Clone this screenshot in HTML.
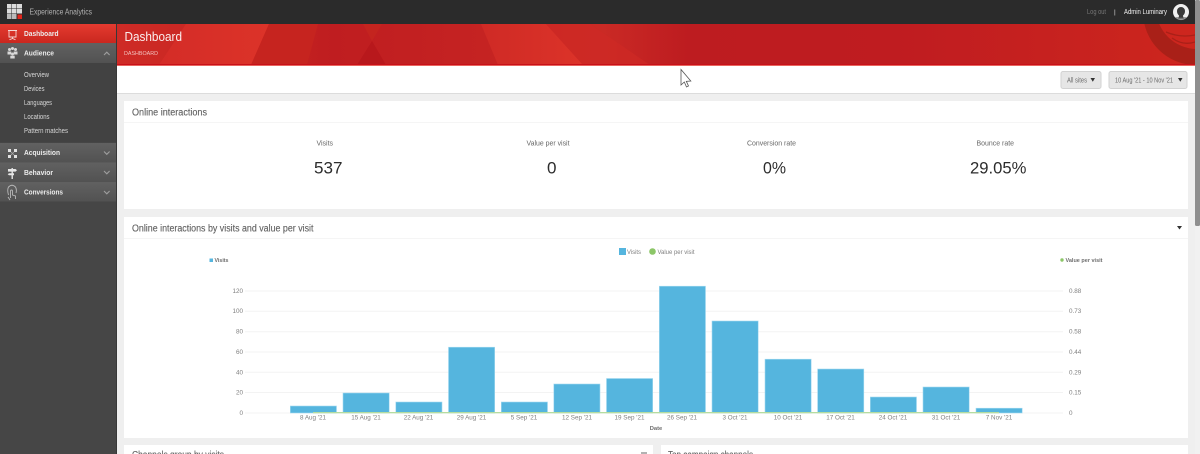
<!DOCTYPE html>
<html lang="en"><head><meta charset="utf-8"><title>Dashboard</title>
<style>
html,body{margin:0;padding:0;width:1200px;height:454px;overflow:hidden;background:#efefef}
svg{display:block}
text{font-family:"Liberation Sans",sans-serif;white-space:pre}
.n{font-size:7.5px;font-weight:bold;fill:#ececec}
.s{font-size:7px;fill:#d8d8d8}
.t{font-size:10px;fill:#5f5f5f;stroke:#5f5f5f;stroke-width:.12px}
.l{font-size:7.2px;fill:#666}
.b{font-size:17px;fill:#2c2c2c}
.a{font-size:6.3px;fill:#808080}
</style></head><body>
<svg xmlns="http://www.w3.org/2000/svg" width="1200" height="454" viewBox="0 0 1200 454">
<defs>
<linearGradient id="hdr" gradientUnits="userSpaceOnUse" x1="117" x2="1195" y1="0" y2="0">
<stop offset="0" stop-color="#ce2b26"/><stop offset=".14" stop-color="#c62420"/><stop offset=".2" stop-color="#bf1d20"/><stop offset=".34" stop-color="#c52322"/><stop offset=".45" stop-color="#ca2a25"/><stop offset=".53" stop-color="#bd1c20"/><stop offset=".72" stop-color="#bf1c20"/><stop offset="1" stop-color="#cd261e"/>
</linearGradient>
<linearGradient id="br1" x1="0" x2="1" y1="0" y2="0"><stop offset="0" stop-color="#d42c27"/><stop offset="1" stop-color="#dc3329"/></linearGradient>
<linearGradient id="br2" x1="0" x2="1" y1="0" y2="0"><stop offset="0" stop-color="#cf2a25"/><stop offset="1" stop-color="#dc3329"/></linearGradient>
<linearGradient id="act" x1="0" x2="0" y1="0" y2="1"><stop offset="0" stop-color="#e53b30"/><stop offset="1" stop-color="#c9271f"/></linearGradient>
<linearGradient id="gr" x1="0" x2="0" y1="0" y2="1"><stop offset="0" stop-color="#616161"/><stop offset="1" stop-color="#525252"/></linearGradient>
<clipPath id="hc"><rect x="117" y="24" width="1078" height="40"/></clipPath>
</defs>

<!-- top bar -->
<rect width="1200" height="24" fill="#2b2b2b"/>
<g fill="#dcdcdc">
<rect x="7" y="4" width="4.5" height="4.5"/><rect x="12" y="4" width="4.5" height="4.5"/><rect x="17" y="4" width="5" height="4.5"/>
<rect x="7" y="9" width="4.5" height="4.5"/><rect x="12" y="9" width="4.5" height="4.5"/><rect x="17" y="9" width="5" height="4.5"/>
<rect x="7" y="14" width="4.5" height="5" fill="#bbb"/><rect x="12" y="14" width="4.5" height="5" fill="#bbb"/>
</g>
<rect x="17.500" y="14.500" width="4.500" height="4.500" fill="#e1261c"/>
<text x="29.500" y="14.500" font-size="8" fill="#b0b0b0" textLength="62.500" lengthAdjust="spacingAndGlyphs">Experience Analytics</text>
<text x="1087" y="14" font-size="7" fill="#777" textLength="19" lengthAdjust="spacingAndGlyphs">Log out</text>
<text x="1114" y="14" font-size="6.500" fill="#ddd">|</text>
<text x="1124" y="14" font-size="7" fill="#f2f2f2" textLength="43" lengthAdjust="spacingAndGlyphs">Admin Luminary</text>
<circle cx="1181" cy="12" r="8" fill="#f1f1f1"/>
<path d="M1178 18.500q1 -1 1 -3q-2 -1.500 -2 -4.500a4 4 0 0 1 8 0q0 3 -2 4.500q0 2 1 3z" fill="#3a3a3a"/>
<path d="M1175 17.500a8 8 0 0 0 12 0l-1.500 -.5h-9z" fill="#555" opacity=".55"/>

<!-- sidebar -->
<rect x="0" y="24" width="117" height="430" fill="#464646"/>
<rect x="116" y="24" width="1" height="430" fill="#383838"/>
<rect x="0" y="24" width="116" height="19" fill="url(#act)"/>
<rect x="0" y="43" width="116" height="20" fill="url(#gr)"/>
<rect x="0" y="63" width="116" height="79" fill="#424242"/>
<rect x="0" y="143" width="116" height="19.500" fill="url(#gr)"/>
<rect x="0" y="162.500" width="116" height="19.500" fill="url(#gr)"/>
<rect x="0" y="182" width="116" height="19.500" fill="url(#gr)"/>

<path d="M8 30.500h9M9 30.500v6.500h7v-6.500M12.500 37v1.500M12.500 38.500l-3 1.200M12.500 38.500l3 1.200" fill="none" stroke="#f5d6d2" stroke-width=".9"/>
<g fill="#d8d8d8"><circle cx="9.500" cy="49.500" r="1.500"/><circle cx="12.500" cy="48.500" r="1.500"/><circle cx="15.500" cy="49.500" r="1.500"/><rect x="7.500" y="51.500" width="3.800" height="3"/><rect x="13.700" y="51.500" width="3.800" height="3"/><circle cx="12.500" cy="54" r="1.500"/><rect x="10.300" y="55.700" width="4.400" height="2.800"/></g>
<g fill="#e2e2e2"><rect x="8" y="149" width="3" height="3"/><rect x="14" y="149" width="3" height="3"/><rect x="8" y="155" width="3" height="3"/><rect x="14" y="155" width="3" height="3"/></g>
<path d="M11 152l3 3M14 152l-3 3" stroke="#a8a8a8" stroke-width=".8"/>
<path d="M11.500 168h1.400v11h-1.400zM8 169h7.500l1.500 1.300 -1.500 1.300h-7.500zM9 173.200h5v2h-5l-1.300 -1z" fill="#e6e6e6"/>
<path d="M8.500 195q-1.500 -5 0 -8q3.500 -3.500 7 0q1.500 3 .5 6M10.500 198v-7a1 1 0 0 1 2 0v4l3 1v3M8 197l2 3" fill="none" stroke="#b8b8b8" stroke-width=".9"/>

<text class="n" x="24" y="36" fill="#fff" textLength="34.500" lengthAdjust="spacingAndGlyphs">Dashboard</text>
<text class="n" x="24" y="55.500" textLength="30" lengthAdjust="spacingAndGlyphs">Audience</text>
<text class="s" x="24" y="77" textLength="25" lengthAdjust="spacingAndGlyphs">Overview</text>
<text class="s" x="24" y="91" textLength="20.500" lengthAdjust="spacingAndGlyphs">Devices</text>
<text class="s" x="24" y="105" textLength="28" lengthAdjust="spacingAndGlyphs">Languages</text>
<text class="s" x="24" y="119" textLength="25.500" lengthAdjust="spacingAndGlyphs">Locations</text>
<text class="s" x="24" y="133" textLength="44" lengthAdjust="spacingAndGlyphs">Pattern matches</text>
<text class="n" x="24" y="155" textLength="36" lengthAdjust="spacingAndGlyphs">Acquisition</text>
<text class="n" x="24" y="175" textLength="29" lengthAdjust="spacingAndGlyphs">Behavior</text>
<text class="n" x="24" y="194.500" textLength="39" lengthAdjust="spacingAndGlyphs">Conversions</text>
<g fill="none" stroke="#9e9e9e" stroke-width="1.100">
<path d="M104 55l2.800 -2.800 2.800 2.800"/>
<path d="M104 151.500l2.800 2.800 2.800 -2.800"/>
<path d="M104 171l2.800 2.800 2.800 -2.800"/>
<path d="M104 191l2.800 2.800 2.800 -2.800"/>
</g>

<!-- red header -->
<rect x="117" y="24" width="1078" height="40" fill="url(#hdr)"/>
<g clip-path="url(#hc)">
<path d="M186 24H269L251 65H159Z" fill="url(#br1)"/>
<path d="M269 24H318L307 65H251Z" fill="#c6241f"/>
<path d="M363 24L372 41 382 24Z" fill="#c4241f"/>
<path d="M372 41L357 65H386Z" fill="#b8181c"/>
<path d="M481 24H546L583 65H498Z" fill="url(#br2)"/>
<path d="M546 24H590L650 65H583Z" fill="#cf2a25" opacity=".7"/>
<circle cx="1196" cy="12" r="53" fill="#a92018"/>
<circle cx="1197" cy="8" r="41" fill="#cd261e"/>
<path d="M1166 32q14 6 29 3M1172 38q11 8 23 4" fill="none" stroke="#a92018" stroke-width="1.300"/>
</g>
<rect x="117" y="64" width="1078" height="1" fill="#c8101a"/>
<rect x="117" y="65" width="1078" height="1" fill="#e9665e"/>
<text x="124.500" y="41" font-size="12.500" fill="#fbeeee" textLength="57.500" lengthAdjust="spacingAndGlyphs">Dashboard</text>
<text x="124" y="55" font-size="5.500" fill="#f3c3bf" textLength="34" lengthAdjust="spacingAndGlyphs">DASHBOARD</text>

<!-- toolbar -->
<rect x="117" y="66" width="1078" height="27" fill="#fff"/>
<rect x="117" y="93" width="1078" height="1" fill="#dcdcdc"/>
<rect x="1061" y="71.500" width="40" height="17" rx="2" fill="#e6e6e6" stroke="#d2d2d2"/>
<rect x="1109" y="71.500" width="78" height="17" rx="2" fill="#e6e6e6" stroke="#d2d2d2"/>
<text x="1067" y="82.500" font-size="7" fill="#6b6b6b" textLength="20" lengthAdjust="spacingAndGlyphs">All sites</text>
<text x="1115" y="82.500" font-size="7" fill="#6b6b6b" textLength="58" lengthAdjust="spacingAndGlyphs">10 Aug '21 - 10 Nov '21</text>
<path d="M1090.500 78h4.500l-2.200 3.800z M1178 78h4.500l-2.200 3.800z" fill="#333"/>

<!-- cursor -->
<path d="M681 69.500v15.500l3.300 -3 2.200 5 2 -1 -2.200 -4.700 4.500 -.3z" fill="#fff" stroke="#555" stroke-width=".8"/>

<!-- background + cards -->
<rect x="117" y="94" width="1078" height="360" fill="#efefef"/>
<rect x="124" y="101" width="1064" height="108" fill="#fff"/>
<rect x="124" y="122" width="1064" height="1" fill="#f5f5f5"/>
<rect x="124" y="217" width="1064" height="221" fill="#fff"/>
<rect x="124" y="238" width="1064" height="1" fill="#f5f5f5"/>
<rect x="124" y="445" width="529" height="9" fill="#fff"/>
<rect x="661" y="445" width="527" height="9" fill="#fff"/>

<text class="t" x="132" y="115.500" textLength="75" lengthAdjust="spacingAndGlyphs">Online interactions</text>
<text class="t" x="132" y="231.500" textLength="181.500" lengthAdjust="spacingAndGlyphs">Online interactions by visits and value per visit</text>
<text class="t" x="132" y="458" textLength="92" lengthAdjust="spacingAndGlyphs">Channels group by visits</text>
<text class="t" x="668" y="458" textLength="85" lengthAdjust="spacingAndGlyphs">Top campaign channels</text>
<path d="M1177 226h5l-2.500 3.500z" fill="#333"/>
<path d="M641 453h6" stroke="#666"/>

<!-- stats -->
<text class="l" x="316.500" y="145.500" textLength="16.500" lengthAdjust="spacingAndGlyphs">Visits</text>
<text class="l" x="526.500" y="145.500" textLength="43" lengthAdjust="spacingAndGlyphs">Value per visit</text>
<text class="l" x="747" y="145.500" textLength="49" lengthAdjust="spacingAndGlyphs">Conversion rate</text>
<text class="l" x="976.500" y="145.500" textLength="37.500" lengthAdjust="spacingAndGlyphs">Bounce rate</text>
<text class="b" x="314" y="173.500" textLength="28.500" lengthAdjust="spacingAndGlyphs">537</text>
<text class="b" x="547" y="173.500" textLength="9.500" lengthAdjust="spacingAndGlyphs">0</text>
<text class="b" x="763" y="173.500" textLength="23" lengthAdjust="spacingAndGlyphs">0%</text>
<text class="b" x="970" y="173.500" textLength="56.500" lengthAdjust="spacingAndGlyphs">29.05%</text>

<!-- legend -->
<rect x="619" y="248" width="7" height="7" fill="#55b5de"/>
<text x="627" y="254" font-size="6.300" fill="#808080" textLength="14" lengthAdjust="spacingAndGlyphs">Visits</text>
<circle cx="652.500" cy="251.500" r="3.300" fill="#8cc668"/>
<text x="657.500" y="254" font-size="6.300" fill="#808080" textLength="37" lengthAdjust="spacingAndGlyphs">Value per visit</text>
<rect x="209.500" y="258.500" width="3.500" height="3.500" fill="#55b5de"/>
<text x="214.500" y="262" font-size="5.800" font-weight="bold" fill="#6e6e6e" textLength="14" lengthAdjust="spacingAndGlyphs">Visits</text>
<circle cx="1062" cy="260" r="1.700" fill="#8cc668"/>
<text x="1065.500" y="262" font-size="5.800" font-weight="bold" fill="#6e6e6e" textLength="37" lengthAdjust="spacingAndGlyphs">Value per visit</text>

<!-- grid -->
<g fill="#f3f3f3">
<rect x="245" y="290.500" width="818" height="1"/><rect x="245" y="310.800" width="818" height="1"/><rect x="245" y="331.200" width="818" height="1"/><rect x="245" y="351.500" width="818" height="1"/><rect x="245" y="371.800" width="818" height="1"/><rect x="245" y="392" width="818" height="1"/><rect x="245" y="412.500" width="818" height="1"/>
</g>
<g>
<text class="a" x="243" y="293" text-anchor="end">120</text>
<text class="a" x="243" y="313.200" text-anchor="end">100</text>
<text class="a" x="243" y="333.500" text-anchor="end">80</text>
<text class="a" x="243" y="354" text-anchor="end">60</text>
<text class="a" x="243" y="374.300" text-anchor="end">40</text>
<text class="a" x="243" y="394.500" text-anchor="end">20</text>
<text class="a" x="243" y="415" text-anchor="end">0</text>
<text class="a" x="1069" y="293">0.88</text>
<text class="a" x="1069" y="313.200">0.73</text>
<text class="a" x="1069" y="333.500">0.58</text>
<text class="a" x="1069" y="354">0.44</text>
<text class="a" x="1069" y="374.300">0.29</text>
<text class="a" x="1069" y="394.500">0.15</text>
<text class="a" x="1069" y="415">0</text>
</g>

<!-- bars -->
<g fill="#55b5de" stroke="#a5daf0" stroke-width=".6">
<rect x="290.300" y="406" width="46.200" height="7"/>
<rect x="343" y="393" width="46.200" height="20"/>
<rect x="395.800" y="402" width="46.200" height="11"/>
<rect x="448.500" y="347.200" width="46.200" height="65.800"/>
<rect x="501.300" y="402" width="46.200" height="11"/>
<rect x="553.800" y="384" width="46.200" height="29"/>
<rect x="606.500" y="378.500" width="46.200" height="34.500"/>
<rect x="659.300" y="286.200" width="46.200" height="126.800"/>
<rect x="712" y="321" width="46.200" height="92"/>
<rect x="765" y="359.200" width="46.200" height="53.800"/>
<rect x="817.600" y="369" width="46.200" height="44"/>
<rect x="870.300" y="397" width="46.200" height="16"/>
<rect x="923" y="387" width="46.200" height="26"/>
<rect x="976" y="408.200" width="46.200" height="4.800"/>
</g>
<rect x="313" y="412" width="686" height="1.300" fill="#b5dca0"/>

<!-- x labels -->
<g text-anchor="middle" font-size="6.300" fill="#808080">
<text x="313" y="419.500">8 Aug '21</text>
<text x="366" y="419.500">15 Aug '21</text>
<text x="418.500" y="419.500">22 Aug '21</text>
<text x="471.500" y="419.500">29 Aug '21</text>
<text x="524" y="419.500">5 Sep '21</text>
<text x="577" y="419.500">12 Sep '21</text>
<text x="629.500" y="419.500">19 Sep '21</text>
<text x="682" y="419.500">26 Sep '21</text>
<text x="735" y="419.500">3 Oct '21</text>
<text x="788" y="419.500">10 Oct '21</text>
<text x="840.500" y="419.500">17 Oct '21</text>
<text x="893" y="419.500">24 Oct '21</text>
<text x="946" y="419.500">31 Oct '21</text>
<text x="999" y="419.500">7 Nov '21</text>
</g>
<text x="656" y="430" text-anchor="middle" font-size="5.800" font-weight="bold" fill="#6e6e6e">Date</text>

<!-- scrollbar -->
<rect x="1195" y="0" width="5" height="454" fill="#f1f1f1"/>
<rect x="1195" y="0" width="5" height="226" rx="1.500" fill="#8f8f8f"/>
</svg>
</body></html>
